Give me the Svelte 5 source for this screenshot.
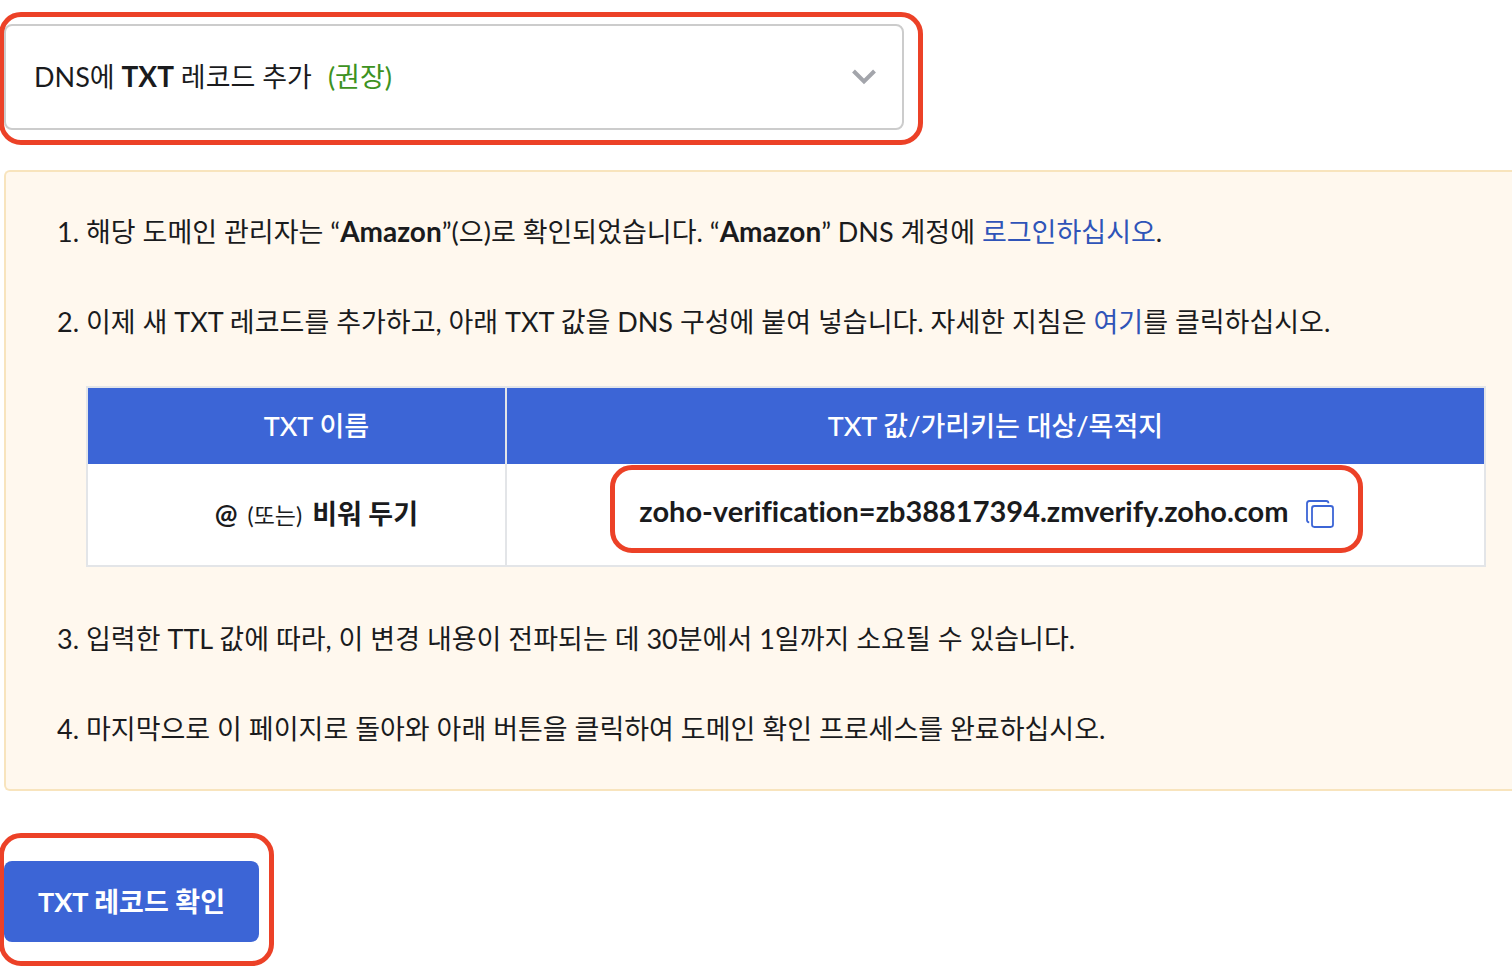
<script>
  const methods = ['DNS에 TXT 레코드 추가 (권장)'];
  const record = 'zoho-verification=zb38817394.zmverify.zoho.com';
  let method = $state(methods[0]);

  function copyRecord() {
    navigator.clipboard?.writeText(record);
  }
</script>

<main>
  <div class="marked method">
    <label class="picker">
      <span class="picked">DNS에 <b>TXT</b> 레코드 추가 <em>(권장)</em></span>
      <svg class="chevron" width="24" height="16" viewBox="0 0 24 16" aria-hidden="true">
        <path d="M1.5 2 12 12.5 22.5 2" fill="none" stroke="#a3a5ab" stroke-width="4" />
      </svg>
      <select bind:value={method}>
        {#each methods as m}
          <option value={m}>{m}</option>
        {/each}
      </select>
    </label>
  </div>

  <section class="panel">
    <ol>
      <li>해당 도메인 관리자는 “<b>Amazon</b>”(으)로 확인되었습니다. “<b>Amazon</b>” DNS 계정에 <a href="#login">로그인하십시오</a>.</li>
      <li>
        이제 새 TXT 레코드를 추가하고, 아래 TXT 값을 DNS 구성에 붙여 넣습니다. 자세한 지침은 <a href="#guide">여기</a>를 클릭하십시오.
        <table>
          <thead>
            <tr>
              <th class="name" scope="col">TXT 이름</th>
              <th scope="col">TXT 값/가리키는 대상/목적지</th>
            </tr>
          </thead>
          <tbody>
            <tr>
              <td class="name"><strong>@</strong><small>(또는)</small><strong>비워 두기</strong></td>
              <td class="value">
                <div class="marked record">
                  <strong>{record}</strong>
                  <button class="copy" type="button" aria-label="복사" onclick={copyRecord}>
                    <svg width="28" height="28" viewBox="0 0 28 28" fill="none" stroke="#3c65d6" stroke-width="1.8" aria-hidden="true">
                      <rect x="6" y="6" width="21" height="21" rx="2.4" />
                      <path d="M22.4 3.2Q22.4 1 20.2 1H3.4Q1 1 1 3.4V20Q1 22.2 3.2 22.4" />
                    </svg>
                  </button>
                </div>
              </td>
            </tr>
          </tbody>
        </table>
      </li>
      <li>입력한 TTL 값에 따라, 이 변경 내용이 전파되는 데 30분에서 1일까지 소요될 수 있습니다.</li>
      <li>마지막으로 이 페이지로 돌아와 아래 버튼을 클릭하여 도메인 확인 프로세스를 완료하십시오.</li>
    </ol>
  </section>

  <div class="marked action">
    <button class="verify" type="button">TXT 레코드 확인</button>
  </div>
</main>

<style>
  :global(body) {
    margin: 0;
    background: #fff;
    overflow-x: hidden;
  }

  main {
    display: flex;
    flex-direction: column;
    align-items: flex-start;
    padding: 12px 0;
    color: #1a1b1d;
    font-family: Lato, 'Noto Sans CJK KR', sans-serif;
    font-size: 27px;
    font-weight: 400;
    font-variant-ligatures: none;
    line-height: 36px;
  }

  .marked {
    position: relative;
    box-sizing: border-box;
  }

  .marked::after {
    content: '';
    position: absolute;
    inset: 0;
    border: 5px solid #ec4127;
    border-radius: 22px;
    pointer-events: none;
  }

  .method {
    width: 100%;
    max-width: 924px;
    margin-left: -1px;
    padding: 12px 19px 15px 5px;
  }

  .picker {
    display: grid;
    grid-template-columns: 1fr auto;
    align-items: center;
    box-sizing: border-box;
    height: 106px;
    padding: 0 26px 0 28px;
    border: 2px solid #ccc;
    border-radius: 8px;
  }

  .picked {
    grid-area: 1 / 1;
  }

  .chevron {
    grid-area: 1 / 2;
  }

  .picked em {
    margin-left: 9px;
    color: #3d9222;
    font-style: normal;
  }

  .picker select {
    grid-area: 1 / 1 / 2 / 3;
    width: 100%;
    height: 100%;
    opacity: 0;
    font: inherit;
    cursor: pointer;
  }

  .panel {
    align-self: stretch;
    margin: 25px 0 42px 4px;
    padding: 42px 26px 42px 80px;
    border: 2px solid #f8e4bd;
    border-right: 0;
    border-radius: 6px 0 0 6px;
    background: #fff8ee;
  }

  ol {
    display: flex;
    flex-direction: column;
    gap: 54px;
    margin: 0;
    padding: 0;
  }

  b {
    font-size: 28px;
    font-weight: 700;
    line-height: 28px;
  }

  a {
    color: #2f54b8;
    text-decoration: none;
  }

  table {
    width: 100%;
    margin-top: 46px;
    border: 2px solid #e3e5e8;
    border-spacing: 0;
    background: #fff;
    table-layout: fixed;
  }

  th,
  td {
    padding: 0;
    text-align: center;
  }

  th {
    height: 76px;
    background: #3c65d6;
    color: #fff;
    font-weight: 500;
  }

  td {
    height: 101px;
  }

  .name {
    box-sizing: border-box;
    width: 30%;
    padding-left: 40px;
    border-right: 2px solid #e3e5e8;
  }

  small {
    margin: 0 10px;
    font-size: 23px;
  }

  .value {
    padding: 0 17px 11px 0;
  }

  td.value {
    height: 90px;
  }

  .record {
    display: inline-flex;
    align-items: center;
    gap: 18px;
    height: 88px;
    padding: 4px 29px 0;
    vertical-align: middle;
    font-size: 29px;
  }

  .copy {
    display: flex;
    padding: 6px 0 0;
    border: 0;
    background: none;
    cursor: pointer;
  }

  .action {
    margin-left: -1px;
    padding: 28px 15px 24px 5px;
  }

  .verify {
    display: block;
    height: 81px;
    padding: 0 34px;
    border: 0;
    border-radius: 8px;
    background: #3c65d6;
    color: #fff;
    font: inherit;
    font-weight: 700;
    cursor: pointer;
  }
</style>
